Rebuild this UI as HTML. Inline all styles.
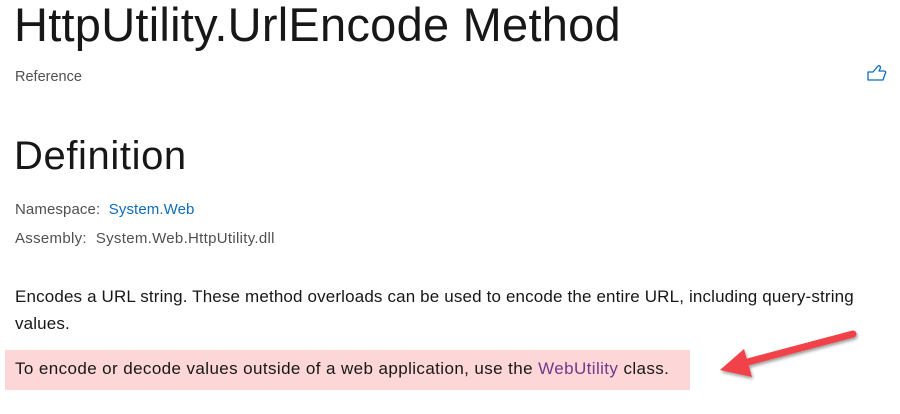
<!DOCTYPE html>
<html><head><style>
body{margin:0;width:900px;height:414px;background:#fff;font-family:"Liberation Sans",sans-serif;color:#171717;position:relative;overflow:hidden}
.a{position:absolute;white-space:nowrap}
</style></head><body>
<div class="a" style="left:14px;top:-3px;font-size:47px;letter-spacing:0.25px">HttpUtility.UrlEncode Method</div>
<div class="a" style="left:15px;top:69px;font-size:14.5px;color:#505050">Reference</div>
<svg class="a" style="left:866px;top:64px" width="22" height="18" viewBox="0 0 22 18"><path d="M2 8h5l5-6c2-1 3 1 2 3l-1 2h5c2 0 2 2 1 3l-2 6H2z" fill="none" stroke="#0f6cbd" stroke-width="1.3" stroke-linejoin="round"/></svg>
<div class="a" style="left:14px;top:134px;font-size:40px;letter-spacing:0.6px">Definition</div>
<div class="a" style="left:15px;top:201px;font-size:15px;color:#505050;letter-spacing:0.1px">Namespace:&nbsp; <span style="color:#0f6cbd">System.Web</span></div>
<div class="a" style="left:15px;top:230px;font-size:15px;color:#505050;letter-spacing:0.3px">Assembly:&nbsp; System.Web.HttpUtility.dll</div>
<div class="a" style="left:15px;top:283px;font-size:17px;letter-spacing:0.15px;white-space:normal;width:875px;line-height:27px">Encodes a URL string. These method overloads can be used to encode the entire URL, including query-string values.</div>
<div class="a" style="left:5px;top:350px;width:685px;height:40px;background:#fdd7d7"></div>
<div class="a" style="left:15px;top:359px;font-size:17px;letter-spacing:0.4px">To encode or decode values outside of a web application, use the <span style="color:#6b3b8a">WebUtility</span> class.</div>
<svg class="a" style="left:700px;top:320px" width="200" height="80"><defs><filter id="s"><feDropShadow dx="1" dy="2" stdDeviation="1.5" flood-opacity="0.4"/></filter></defs><g filter="url(#s)"><line x1="153" y1="14" x2="40" y2="44" stroke="#f2434a" stroke-width="7" stroke-linecap="round"/><path d="M20 50L44 29L52 57Z" fill="#f2434a"/></g></svg>
</body></html>
